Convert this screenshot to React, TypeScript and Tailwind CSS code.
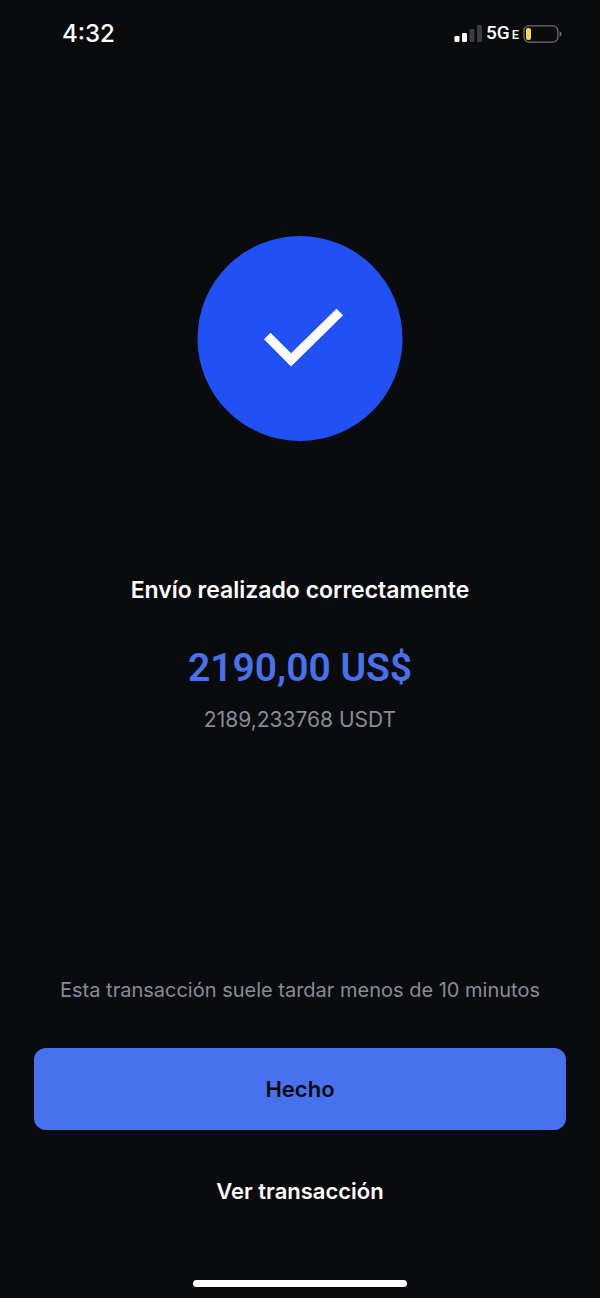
import React from 'react';

function StatusBar() {
  return (
    <header className="flex h-17 items-center justify-between pl-[62px] pr-[38px] text-white">
      <time className="text-2xl font-medium">4:32</time>
      <div className="flex items-center gap-1">
        <svg width="28" height="18" viewBox="0 0 28 18" aria-hidden="true">
          <rect x="0.5" y="11" width="5" height="6" rx="1.3" fill="#fff" />
          <rect x="8" y="8" width="5" height="9" rx="1.3" fill="#fff" />
          <rect x="15.5" y="4" width="5" height="13" rx="1.3" fill="#3b3c3d" />
          <rect x="23" y="0" width="5" height="17" rx="1.3" fill="#3b3c3d" />
        </svg>
        <div className="flex items-baseline gap-0.5 font-['Roboto',sans-serif] leading-6 font-medium">
          <span className="text-[19px]">5G</span>
          <span className="text-[13px]">E</span>
        </div>
        <svg width="39" height="18" viewBox="0 0 39 18" aria-hidden="true">
          <rect x="0.9" y="0.9" width="34" height="16.2" rx="5" fill="none" stroke="#6e6f71" strokeWidth="1.3" />
          <rect x="3" y="3" width="5" height="12" rx="2" fill="#f7d848" />
          <path d="M36.6 6.2c1.3.4 2 1.5 2 2.8s-.7 2.4-2 2.8z" fill="#6e6f71" />
        </svg>
      </div>
    </header>
  );
}

function SuccessMark() {
  return (
    <svg className="size-[206px]" viewBox="-0.5 0 206 206" role="img" aria-label="Completado">
      <circle cx="102.5" cy="102.5" r="102.5" fill="#2151f5" />
      <path d="M66.5 103.2 73 96.8 93.5 117.3 139 72.7 145.6 79.2 93.5 130.6z" fill="#fff" />
    </svg>
  );
}

export default function App() {
  return (
    <div className="flex min-h-screen flex-col bg-[#0a0b0d] font-['Inter',sans-serif]">
      <StatusBar />

      <main className="flex flex-1 flex-col px-[34px] pt-42 text-center">
        <div className="flex justify-center">
          <SuccessMark />
        </div>

        <h1 className="mt-[132px] text-[23px] leading-8 font-semibold text-white">
          Envío realizado correctamente
        </h1>
        <p className="mt-[38px] font-['Roboto',sans-serif] text-[39px] leading-12 font-semibold text-[#4771ed]">
          2190,00 US$
        </p>
        <p className="mt-3 text-[21px] leading-8 text-[#898a98]">2189,233768 USDT</p>

        <div className="mt-auto flex flex-col pt-12">
          <p className="mb-11 text-xl leading-7 text-[#898a98]">
            Esta transacción suele tardar menos de 10 minutos
          </p>
          <button
            type="button"
            className="h-[82px] rounded-xl bg-[#4771ed] text-[22px] font-semibold text-[#0a0b0d]"
          >
            Hecho
          </button>
          <button type="button" className="mt-5 h-[82px] rounded-xl text-[22px] font-semibold text-white">
            Ver transacción
          </button>
        </div>
      </main>

      {/* Home indicator */}
      <div className="mx-auto mt-12 mb-[11px] h-[7px] w-[214px] rounded-full bg-white" />
    </div>
  );
}
